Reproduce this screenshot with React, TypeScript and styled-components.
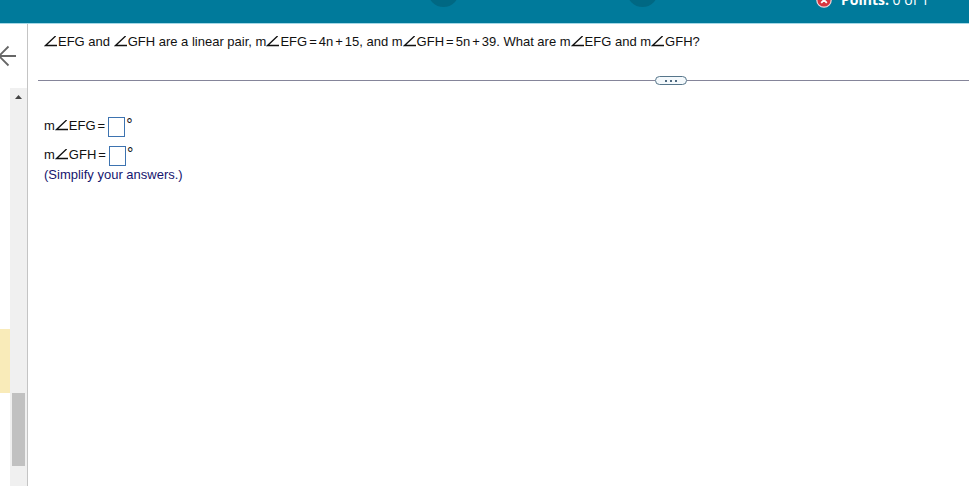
import React from "react";
import styled, { createGlobalStyle } from "styled-components";

const GlobalStyle = createGlobalStyle`
  * { box-sizing: border-box; }
  body {
    margin: 0;
    background: #fff;
    color: #111;
    font-family: "Liberation Sans", Arial, sans-serif;
    font-size: 13px;
    line-height: 16px;
  }
  button { padding: 0; border: 0; background: none; cursor: pointer; }
`;

const Page = styled.div`
  display: flex;
  flex-direction: column;
  height: 100vh;
  overflow: hidden;
`;

const Header = styled.header`
  display: grid;
  grid-template-columns: 1fr auto 1fr;
  grid-template-rows: 100%;
  align-items: end;
  flex: none;
  height: 24px;
  overflow: hidden;
  background: #007a9b;
  border-bottom: 1px solid #a5d8e6;
  color: #fff;
`;

const Pager = styled.nav`
  grid-column: 2;
  display: flex;
  gap: 168px;
  padding: 0 0 16px 116px;
`;

const PagerButton = styled.button`
  && {
    width: 31px;
    height: 31px;
    border-radius: 50%;
    background: #006883;
  }
`;

const Score = styled.div`
  display: flex;
  align-items: center;
  justify-content: flex-end;
  gap: 9px;
  padding: 0 40px 13px 0;
  font-family: "Open Sans", sans-serif;
  font-size: 14px;
  line-height: 20px;
  white-space: pre;
`;

const Body = styled.div`
  display: flex;
  flex: 1;
  min-height: 0;
`;

const Sidebar = styled.aside`
  display: flex;
  flex-direction: column;
  flex: none;
  width: 28px;
  border-right: 1px solid #c4c4c4;
`;

const BackButton = styled.button`
  display: flex;
  align-items: center;
  flex: none;
  height: 64px;
`;

const SidebarScroll = styled.div`
  display: flex;
  flex: 1;
  min-height: 0;
`;

const QuestionList = styled.div`
  width: 10px;
  padding-top: 241px;
`;

const CurrentQuestion = styled.div`
  height: 64px;
  background: #f9ebb9;
`;

const Track = styled.div`
  display: flex;
  flex-direction: column;
  align-items: center;
  justify-content: space-between;
  width: 17px;
  padding: 7px 0 20px;
  background: #f0f0f0;
`;

const Thumb = styled.div`
  width: 13px;
  height: 73px;
  background: #c1c1c1;
`;

const Main = styled.main`
  flex: 1;
  min-width: 0;
  padding: 10px 0 0 10px;
`;

const Question = styled.p`
  margin: 0;
  padding-left: 6px;
`;

const Divider = styled.div`
  display: flex;
  align-items: center;
  margin-top: 26px;
`;

const Rule = styled.div<{ $fill?: boolean }>`
  height: 1px;
  background: #85859a;
  flex: ${(p) => (p.$fill ? "617 1 0" : "282 1 0")};
`;

const MoreButton = styled.button`
  && {
    display: flex;
    align-items: center;
    justify-content: center;
    gap: 3px;
    width: 32px;
    height: 9px;
    border: 1px solid #56758a;
    border-radius: 5px;
    background: #f4f9fc;
  }
`;

const Dot = styled.span`
  width: 2px;
  height: 2px;
  background: #4f6a80;
`;

const Answers = styled.form`
  display: flex;
  flex-direction: column;
  gap: 9px;
  padding: 32px 0 0 6px;
`;

const AnswerRow = styled.div`
  display: flex;
  align-items: flex-start;
  height: 20px;
`;

const AnswerLabel = styled.label`
  padding-top: 1px;
`;

const AnswerInput = styled.input`
  width: 17px;
  height: 20px;
  margin-left: 1px;
  padding: 0;
  border: 1px solid #3d73b0;
  background: #fff;
  font: inherit;
  text-align: center;
`;

const Degree = styled.span`
  margin-left: 1px;
  font-size: 16px;
`;

const Hint = styled.p`
  margin: 0;
  padding: 1px 0 0 6px;
  color: #15156e;
`;

const Operator = styled.span`
  margin: 0 2px;
`;

const AngleIcon = styled.svg`
  width: 14px;
  height: 11px;
  vertical-align: -1px;
`;

const Angle = ({ name }: { name: string }) => (
  <>
    <AngleIcon viewBox="0 0 14 11" aria-label="angle">
      <path d="M11.6 0L1.6 9.5H13" fill="none" stroke="#111" strokeWidth="1.3" />
    </AngleIcon>
    {name}
  </>
);

const Answer = ({ name }: { name: string }) => (
  <AnswerRow>
    <AnswerLabel htmlFor={name}>
      m<Angle name={name} />
      <Operator>=</Operator>
    </AnswerLabel>
    <AnswerInput id={name} type="text" />
    <Degree>°</Degree>
  </AnswerRow>
);

export default function App() {
  return (
    <>
      <GlobalStyle />
      <Page>
        <Header>
          <Pager aria-label="Questions">
            <PagerButton aria-label="Previous question" />
            <PagerButton aria-label="Next question" />
          </Pager>
          <Score>
            <svg width="16" height="16" viewBox="0 0 16 16" aria-hidden="true">
              <circle cx="8" cy="8" r="7.2" fill="#d9363e" stroke="#f3d9dc" strokeWidth="1.2" />
              <path d="M5.2 5.2l5.6 5.6M10.8 5.2l-5.6 5.6" stroke="#fff" strokeWidth="1.8" />
            </svg>
            <span>
              <b>Points:</b> 0 of 1
            </span>
          </Score>
        </Header>
        <Body>
          <Sidebar>
            <BackButton aria-label="Back">
              <svg width="16" height="22" viewBox="0 0 16 22" fill="none" stroke="#666" strokeWidth="1.8">
                <path d="M16 11H0M8.5 1.5L-1 11l9.5 9.5" />
              </svg>
            </BackButton>
            <SidebarScroll>
              <QuestionList>
                <CurrentQuestion />
              </QuestionList>
              <Track>
                <svg width="7" height="4" viewBox="0 0 7 4" aria-hidden="true">
                  <path d="M0 4L3.5 0 7 4z" fill="#444" />
                </svg>
                <Thumb />
              </Track>
            </SidebarScroll>
          </Sidebar>
          <Main>
            <Question>
              <Angle name="EFG" /> and <Angle name="GFH" /> are a linear pair, m
              <Angle name="EFG" />
              <Operator>=</Operator>4n<Operator>+</Operator>15, and m
              <Angle name="GFH" />
              <Operator>=</Operator>5n<Operator>+</Operator>39. What are m
              <Angle name="EFG" /> and m<Angle name="GFH" />?
            </Question>
            <Divider>
              <Rule $fill />
              <MoreButton aria-label="Show more">
                <Dot />
                <Dot />
                <Dot />
              </MoreButton>
              <Rule />
            </Divider>
            <Answers>
              <Answer name="EFG" />
              <Answer name="GFH" />
            </Answers>
            <Hint>(Simplify your answers.)</Hint>
          </Main>
        </Body>
      </Page>
    </>
  );
}
